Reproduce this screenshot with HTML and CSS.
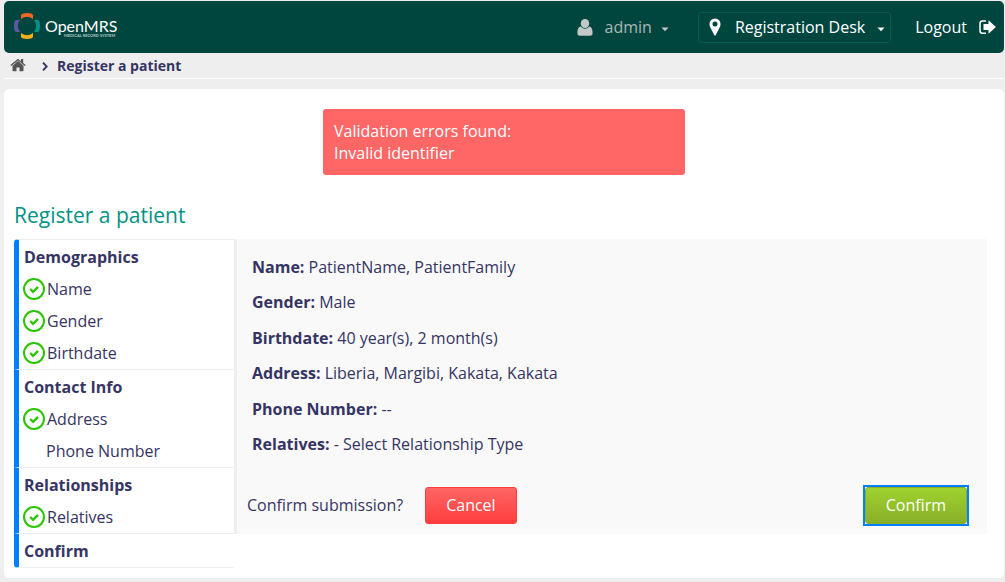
FILE: index.html
```html
<!DOCTYPE html>
<html lang="en">
<head>
<meta charset="utf-8">
<title>OpenMRS - Register a patient</title>
<link rel="stylesheet" href="styles.css">
</head>
<body>
<svg class="sprite" aria-hidden="true">
  <symbol id="check" viewBox="0 0 22 22">
    <circle cx="11" cy="11" r="10" fill="none" stroke="#2ac502" stroke-width="2"/>
    <path d="M7.2 11l2.900 2.800 4.900-4.900" fill="none" stroke="#2ac502" stroke-width="2.300"/>
  </symbol>
</svg>
<header class="topbar">
  <a class="logo" href="#" aria-label="OpenMRS">
    <svg width="110" height="30" viewBox="0 0 110 30">
      <path d="M7 7V3.500Q7 1.800 9 1.400 13 .6 17 1.400 19 1.800 19 3.500V7Q13 2.500 7 7Z" fill="#f26522"/>
      <path d="M7 21V24.500Q7 26.200 9 26.600 13 27.400 17 26.600 19 26.200 19 24.500V21Q13 25.500 7 21Z" fill="#fbaf17"/>
      <path d="M6 8H2.500Q.8 8 .4 10-.4 14 .4 18 .8 20 2.500 20H6Q1.500 14 6 8Z" fill="#5b57a6"/>
      <path d="M20 8H23.500Q25.200 8 25.600 10 26.400 14 25.600 18 25.200 20 23.500 20H20Q24.500 14 20 8Z" fill="#009384"/>
      <text class="logo-name" x="31" y="20">OpenMRS</text>
      <text class="logo-tag" x="50" y="25">MEDICAL RECORD SYSTEM</text>
    </svg>
  </a>
  <nav class="account">
    <button class="user" type="button">
      <svg width="16" height="17" viewBox="0 0 16 17" fill="#c4c8c7"><ellipse cx="8" cy="4.500" rx="4.200" ry="4.500"/><path d="M3.800 7.500C1 8 .4 11 .4 14q0 2.800 2.600 2.800h10q2.600 0 2.600-2.800c0-3-.6-6-3.400-6.500Q8 12 3.800 7.500Z"/></svg>
      <span>admin</span>
      <svg width="8" height="5" viewBox="0 0 8 5" fill="#c4c8c7"><path d="M.5.500h7L4 4.300Z"/></svg>
    </button>
    <button class="location" type="button">
      <svg width="12" height="18" viewBox="0 0 12 18"><path fill="#fff" fill-rule="evenodd" d="M6 .5A5.500 5.500 0 0 0 .5 6c0 2.200.8 3.200 1.500 4.700L5.200 17q.8 1.100 1.600 0L10 10.700c.7-1.500 1.500-2.500 1.500-4.700A5.500 5.500 0 0 0 6 .5Zm0 3.100a2.500 2.500 0 1 1 0 5 2.500 2.500 0 0 1 0-5Z"/></svg>
      <span>Registration Desk</span>
      <svg width="8" height="5" viewBox="0 0 8 5" fill="#fff"><path d="M.5.500h7L4 4.300Z"/></svg>
    </button>
    <a class="logout" href="#">
      <span>Logout</span>
      <svg width="17" height="15" viewBox="0 0 17 15"><path d="M7 1H3.500Q1 1 1 3.500V10.700Q1 13.200 3.500 13.200H7" fill="none" stroke="#fff" stroke-width="1.500"/><path d="M4.500 4H9.500V.3L16.900 7 9.500 13.700V10H4.500Z" fill="#fff"/></svg>
    </a>
  </nav>
</header>
<nav class="breadcrumbs" aria-label="Breadcrumb">
  <a class="home" href="#" aria-label="Home">
    <svg width="16" height="16" viewBox="0 0 16 16" fill="#555"><path d="M8 3.100 2.500 7.700V12.500q0 .8.800.8H6.500V9.500h3v3.800h3.200q.8 0 .8-.8V7.700Z"/><path d="M.3 7.100 8 .7l3 2.500V1h2.200v4l2.500 2.100-.9 1L8 2.500 1.200 8.100Z"/></svg>
  </a>
  <svg width="6" height="10" viewBox="0 0 6 10"><path d="M1 1.700 4.700 5.500 1 9.300" fill="none" stroke="#363463" stroke-width="1.900"/></svg>
  <span>Register a patient</span>
</nav>
<main class="card">
  <div class="alert" role="alert">
    <p>Validation errors found:</p>
    <p>Invalid identifier</p>
  </div>
  <h1>Register a patient</h1>
  <div class="wizard">
    <ul class="steps">
      <li class="section"><strong>Demographics</strong>
        <ul>
          <li><svg class="tick"><use href="#check"/></svg>Name</li>
          <li><svg class="tick"><use href="#check"/></svg>Gender</li>
          <li><svg class="tick"><use href="#check"/></svg>Birthdate</li>
        </ul>
      </li>
      <li class="section"><strong>Contact Info</strong>
        <ul>
          <li><svg class="tick"><use href="#check"/></svg>Address</li>
          <li class="pending">Phone Number</li>
        </ul>
      </li>
      <li class="section"><strong>Relationships</strong>
        <ul>
          <li><svg class="tick"><use href="#check"/></svg>Relatives</li>
        </ul>
      </li>
      <li class="section"><strong>Confirm</strong></li>
    </ul>
    <form class="panel">
      <div class="summary">
        <p><strong>Name:</strong> PatientName, PatientFamily</p>
        <p><strong>Gender:</strong> Male</p>
        <p><strong>Birthdate:</strong> 40 year(s), 2 month(s)</p>
        <p><strong>Address:</strong> Liberia, Margibi, Kakata, Kakata</p>
        <p><strong>Phone Number:</strong> --</p>
        <p><strong>Relatives:</strong> - Select Relationship Type</p>
      </div>
      <div class="actions">
        <span>Confirm submission?</span>
        <button class="btn cancel" type="button">Cancel</button>
        <div class="focus-ring"><button class="btn confirm" type="button">Confirm</button></div>
      </div>
    </form>
  </div>
</main>
</body>
</html>
```

FILE: styles.css
```css
* { box-sizing: border-box; }
body {
  margin: 0;
  padding: 1px 1px 4px 4px;
  background: #eee;
  color: #363463;
  font: 16px/22px "Open Sans", "Noto Sans", sans-serif;
}
ul, p, h1 { margin: 0; padding: 0; }
ul { list-style: none; }
a { color: inherit; text-decoration: none; }
button { font: inherit; color: inherit; background: none; border: 0; padding: 0; cursor: pointer; }
svg { display: block; flex: none; }
.sprite { width: 0; height: 0; position: absolute; }

.topbar {
  display: flex;
  align-items: center;
  justify-content: space-between;
  height: 52px;
  padding: 0 8px 0 10px;
  border-radius: 5px;
  background: #00463f;
  color: #fff;
}
.logo-name { font: 16px Lato, sans-serif; fill: #fff; }
.logo-tag { font: bold 4px Lato, sans-serif; fill: #b5cac7; }
.account { display: flex; align-items: center; }
.user, .location, .logout { display: flex; align-items: center; }
.user { gap: 12px; margin-right: 29px; color: #a9b8b5; }
.user svg:last-child { margin: 4px 0 0 -3px; }
.location {
  gap: 14px;
  height: 31px;
  margin-right: 24px;
  padding: 0 5px 0 10px;
  border: 1px solid #005c53;
  border-radius: 3px;
}
.location svg:last-child { margin: 4px 0 0 -5px; }
.location span { margin-right: 3px; }
.logout { gap: 12px; }

.breadcrumbs {
  display: flex;
  align-items: center;
  height: 26px;
  padding: 0 6px;
  border-bottom: 1px solid #fff;
  font-size: 14px;
  font-weight: bold;
}
.home { margin-right: 16px; }
.breadcrumbs span { margin-left: 9px; }

.card {
  margin-top: 10px;
  padding: 20px 10px 10px;
  border-radius: 5px;
  background: #fff;
}
.alert {
  width: 362px;
  max-width: 100%;
  margin: 0 auto;
  padding: 11px;
  border-radius: 3px;
  background: #f66;
  color: #fff;
}
h1 { margin: 27px 0 11px; color: #009384; font-size: 21px; font-weight: normal; line-height: 26px; }
.wizard { display: flex; align-items: flex-start; margin-right: 7px; }
.steps { width: 220px; flex: none; }
.section {
  padding: 1px 0 0 5px;
  border-left: 5px solid #007fff;
  border-bottom: 1px solid #eee;
}
.section:first-child { border-top: 1px solid #eee; border-top-left-radius: 4px; }
.section:last-child { border-bottom-left-radius: 4px; }
.section strong { display: block; line-height: 32px; }
.section li { display: flex; align-items: center; gap: 2px; height: 32px; margin-left: -1px; }
.section .pending { padding-left: 23px; }
.tick { width: 22px; height: 22px; }

.panel {
  flex: 1;
  min-width: 0;
  padding: 10px 18px 8px 10px;
  border-left: 3px solid #eee;
  background: #f9f9f9;
}
.summary { display: grid; grid-auto-rows: 1fr; align-items: center; min-height: 213px; padding-left: 5px; }
.actions { display: flex; align-items: center; margin-top: 23px; }
.actions span { padding-bottom: 2px; }
.btn { display: block; height: 37px; padding: 0 20px 2px; border: 1px solid; border-radius: 3px; color: #fff; }
.cancel { margin-left: 22px; border-color: #ff3d3d; background: linear-gradient(#ff6666, #ff3d3d); }
.confirm { border-color: #88af28; background: linear-gradient(#9fd22f, #88af28); }
.focus-ring { margin-left: auto; border: 2px solid #007fff; background: #fff; }
```
